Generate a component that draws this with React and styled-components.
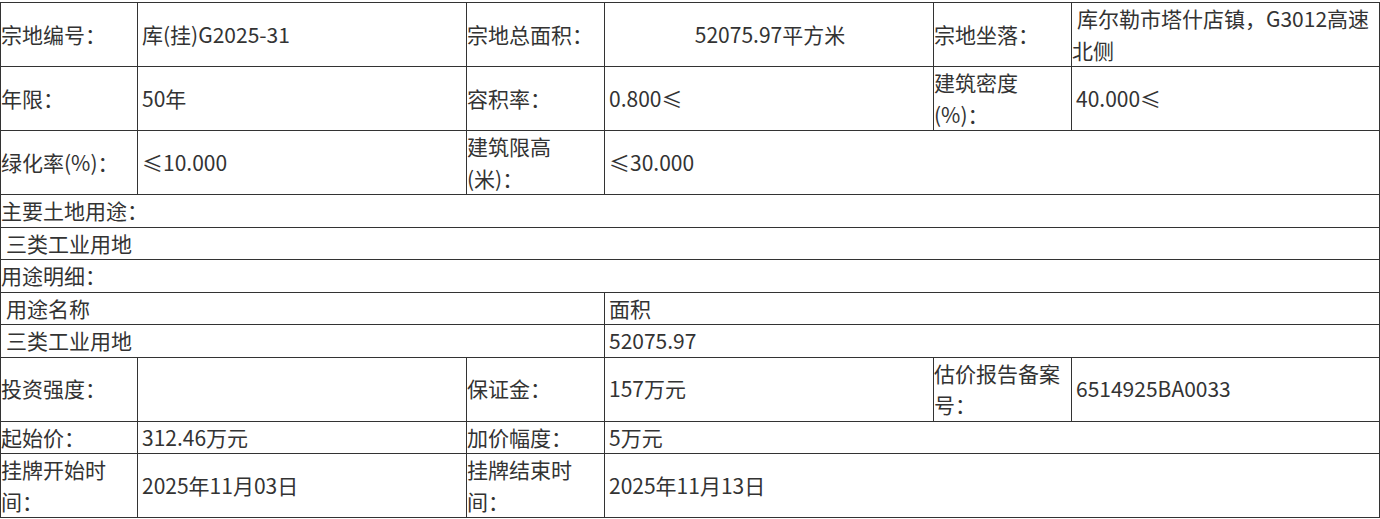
import React from "react"
import styled, { createGlobalStyle } from 'styled-components';

const GlobalStyle = createGlobalStyle`
    html, body {
        margin: 0;
        padding: 0;
        background: #fff;
    }
    body {
        font-family: "Noto Sans CJK SC", "Noto Sans", sans-serif;
        color: #333;
    }
`;

const cols = [137, 329, 138, 329, 138, 308];

const App = () => {
  return (
    <StyledPage>
        <GlobalStyle/>
        <Table>
            <colgroup>
                {cols.map((w, i) => <col key={i} style={{width: w}}/>)}
            </colgroup>
            <tbody>
                <tr>
                    <Label>宗地编号：</Label>
                    <Value>库(挂)G2025-31</Value>
                    <Label>宗地总面积：</Label>
                    <Value $center>52075.97平方米</Value>
                    <Label>宗地坐落：</Label>
                    <Value $indent>库尔勒市塔什店镇，G3012高速北侧</Value>
                </tr>
                <tr>
                    <Label>年限：</Label>
                    <Value>50年</Value>
                    <Label>容积率：</Label>
                    <Value>0.800≤</Value>
                    <Label>建筑密度(%)：</Label>
                    <Value>40.000≤</Value>
                </tr>
                <tr>
                    <Label>绿化率(%)：</Label>
                    <Value>≤10.000</Value>
                    <Label>建筑限高(米)：</Label>
                    <Value colSpan={3}>≤30.000</Value>
                </tr>
                <tr>
                    <Label colSpan={6}>主要土地用途：</Label>
                </tr>
                <tr>
                    <Value colSpan={6} $tight>三类工业用地</Value>
                </tr>
                <tr>
                    <Label colSpan={6}>用途明细：</Label>
                </tr>
                <tr>
                    <Value colSpan={3} $tight>用途名称</Value>
                    <Value colSpan={3}>面积</Value>
                </tr>
                <tr>
                    <Value colSpan={3} $tight>三类工业用地</Value>
                    <Value colSpan={3}>52075.97</Value>
                </tr>
                <tr>
                    <Label>投资强度：</Label>
                    <Value></Value>
                    <Label>保证金：</Label>
                    <Value>157万元</Value>
                    <Label>估价报告备案号：</Label>
                    <Value>6514925BA0033</Value>
                </tr>
                <tr>
                    <Label>起始价：</Label>
                    <Value>312.46万元</Value>
                    <Label>加价幅度：</Label>
                    <Value colSpan={3}>5万元</Value>
                </tr>
                <tr>
                    <Label>挂牌开始时间：</Label>
                    <Value>2025年11月03日</Value>
                    <Label>挂牌结束时间：</Label>
                    <Value colSpan={3}>2025年11月13日</Value>
                </tr>
            </tbody>
        </Table>
    </StyledPage>
  )
}

const StyledPage = styled.div`
    padding-top: 2px;
`;

const Table = styled.table`
    width: 1379px;
    table-layout: fixed;
    border-collapse: collapse;
    font-size: 21px;
    line-height: 31.5px;
`;

const Cell = styled.td`
    border: 1px solid #333;
    vertical-align: middle;
    padding: 0 2px;
    word-break: break-all;
`;

const Label = styled(Cell)`
    padding-left: 0;
`;

const Value = styled(Cell)`
    padding-left: ${props => props.$indent ? '0' : props.$tight ? '5px' : '4px'};
    text-indent: ${props => props.$indent ? '5px' : '0'};
    text-align: ${props => props.$center ? 'center' : 'left'};
`;

export default App
